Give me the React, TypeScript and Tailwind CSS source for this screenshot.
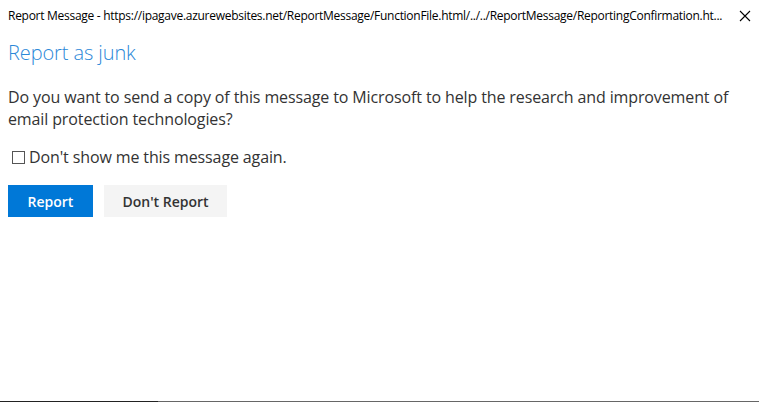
import React from "react";

export default function App() {
  const font = { fontFamily: '"Open Sans", "Noto Sans", sans-serif' };
  return (
    <div className="w-[759px] h-[402px] bg-white flex flex-col overflow-hidden" style={font}>
      <div className="h-[32px] flex items-center pl-[8px] pr-[8px] shrink-0">
        <div className="flex-1 text-[12px] text-black whitespace-nowrap tracking-[-0.28px]">
          Report Message - https://ipagave.azurewebsites.net/ReportMessage/FunctionFile.html/../../ReportMessage/ReportingConfirmation.ht...
        </div>
        <svg width="12" height="12" viewBox="0 0 12 12" className="shrink-0">
          <path d="M1 1 L11 11 M11 1 L1 11" stroke="#000" strokeWidth="1.1" />
        </svg>
      </div>
      <div className="flex-1 px-[8px]">
        <h1 className="text-[20px] font-light text-[#2b88d8] leading-[28px] mt-[7px] tracking-[-0.1px]">Report as junk</h1>
        <p className="text-[16px] text-[#333] leading-[22px] mt-[19px] w-[735px] tracking-[-0.12px]">
          Do you want to send a copy of this message to Microsoft to help the research and improvement of email protection technologies?
        </p>
        <label className="flex items-center mt-[16px] text-[16px] text-[#333] leading-[22px] tracking-[-0.12px]">
          <span className="w-[13px] h-[13px] border border-[#555] ml-[4px] mr-[4px] inline-block"></span>
          Don't show me this message again.
        </label>
        <div className="flex gap-[11px] mt-[17px]">
          <button className="w-[85px] h-[32px] bg-[#0078d7] text-white text-[14px] font-semibold">Report</button>
          <button className="w-[123px] h-[32px] bg-[#f4f4f4] text-[#333] text-[14px] font-semibold">Don't Report</button>
        </div>
      </div>
      <div className="h-[1px] flex shrink-0">
        <div className="w-[158px] bg-[#222]"></div>
        <div className="flex-1 bg-[#666]"></div>
      </div>
    </div>
  );
}
